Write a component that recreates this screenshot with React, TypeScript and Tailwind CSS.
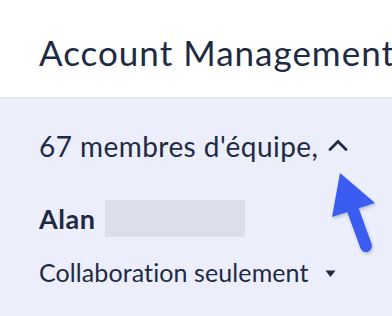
export default function App() {
  return (
    <div
      className="w-[392px] h-[316px] overflow-hidden bg-[#eceefb] text-[#1e2b45] relative"
      style={{ fontFamily: "Lato, 'Noto Sans', sans-serif" }}
    >
      <div className="h-[98px] bg-white border-b border-[#dfe2ec] pl-[39px] pt-[31px]">
        <h1 className="text-[35px] leading-[42px] tracking-[1px] whitespace-nowrap">Account Management</h1>
      </div>

      <div className="pl-[39px] pt-[31px]">
        <div className="flex items-center h-[34px] text-[28px] leading-[34px] tracking-[0.45px] whitespace-nowrap">
          <span>67 membres d'équipe,</span>
          <svg className="ml-[10px] mt-[-2px]" width="20" height="12" viewBox="0 0 20 12" fill="none">
            <path d="M2 10.5L10 2.5L18 10.5" stroke="#1e2b45" strokeWidth="2.8" strokeLinecap="round" />
          </svg>
        </div>

        <div className="flex items-center mt-[37px] h-[37px]">
          <span className="text-[27px] font-bold leading-[37px] tracking-[0.5px]">Alan</span>
          <div className="ml-[10px] w-[140px] h-[37px] bg-[#dadfea]" />
        </div>

        <div className="flex items-center mt-[20px] h-[30px] text-[25px] leading-[30px] tracking-[0.1px] whitespace-nowrap">
          <span>Collaboration seulement</span>
          <svg className="ml-[16px] mt-[4px]" width="11" height="8" viewBox="0 0 11 8">
            <path d="M0.5 0.5H10.5L5.5 7Z" fill="#1e2b45" />
          </svg>
        </div>
      </div>

      <svg className="absolute left-[320px] top-[160px]" width="72" height="100" viewBox="0 0 72 100" fill="none">
        <defs>
          <filter id="sh" x="-20%" y="-20%" width="140%" height="140%">
            <feDropShadow dx="1" dy="2" stdDeviation="1.5" floodColor="#1e2b45" floodOpacity="0.25" />
          </filter>
        </defs>
        <g filter="url(#sh)" fill="#3a5cf0">
          <path d="M20 13L55 43L12 57Z" />
          <path d="M30 42L46 86" stroke="#3a5cf0" strokeWidth="12" strokeLinecap="round" />
        </g>
      </svg>
    </div>
  );
}
